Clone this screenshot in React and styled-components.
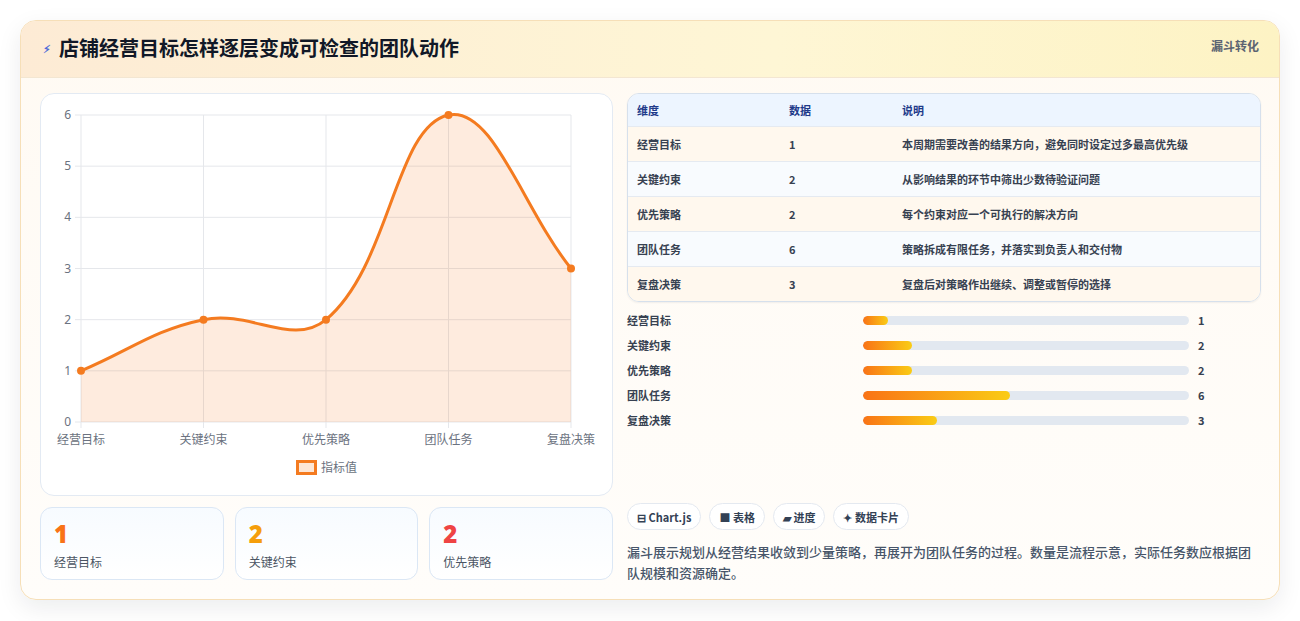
import React from 'react';
import styled, { createGlobalStyle } from 'styled-components';

const Global = createGlobalStyle`
  body { margin: 0; background: #ffffff; font-family: "Noto Sans CJK SC", "Noto Sans", sans-serif; }
`;

const Page = styled.div`
  padding: 20px 20px 21px 20px;
  height: 621px;
  box-sizing: border-box;
`;

const Card = styled.div`
  height: 580px;
  box-sizing: border-box;
  border: 1px solid #f6dfb8;
  border-radius: 16px;
  background: linear-gradient(180deg, #fffaf3 0%, #fffdfa 100%);
  box-shadow: 0 8px 24px rgba(15, 23, 42, 0.08);
  overflow: hidden;
`;

const Header = styled.div`
  height: 56px;
  display: flex;
  align-items: flex-start;
  justify-content: space-between;
  padding: 0 20px 0 22px;
  background: linear-gradient(90deg, #fdebd5 0%, #fef6d5 60%, #fdf3c4 100%);
  border-bottom: 1px solid #f3e6d2;
`;

const Title = styled.h1`
  margin: 12px 0 0;
  display: flex;
  align-items: center;
  gap: 8px;
  font-size: 20px;
  font-weight: 700;
  color: #111827;
`;

const Bolt = styled.span`
  font-size: 11px;
  color: #4f6bd8;
`;

const Tag = styled.span`
  margin-top: 16px;
  font-size: 12px;
  font-weight: 700;
  color: #5b6472;
`;

const Body = styled.div`
  display: grid;
  grid-template-columns: 573px 634px;
  gap: 14px;
  padding: 15px 19px 0 19px;
`;

const Left = styled.div`
  display: flex;
  flex-direction: column;
  gap: 11px;
`;

const ChartBox = styled.div`
  height: 403px;
  box-sizing: border-box;
  border: 1px solid #e3eaf3;
  border-radius: 14px;
  background: #ffffff;
`;

const Stats = styled.div`
  display: grid;
  grid-template-columns: repeat(3, 1fr);
  gap: 11px;
`;

const Stat = styled.div`
  height: 73px;
  box-sizing: border-box;
  border: 1px solid #dbe7f5;
  border-radius: 12px;
  background: linear-gradient(180deg, #f7fbff, #ffffff);
  padding: 12px 13px;
`;

const StatNum = styled.div`
  font-family: "Open Sans", sans-serif;
  font-size: 24px;
  font-weight: 800;
  line-height: 28px;
  color: ${p => p.$c};
`;

const StatLabel = styled.div`
  margin-top: 5px;
  font-size: 12px;
  color: #4b5563;
`;

const Right = styled.div`
  display: flex;
  flex-direction: column;
`;

const Table = styled.div`
  border: 1px solid #d6e0ec;
  border-radius: 12px;
  overflow: hidden;
  box-shadow: 0 1px 2px rgba(15, 23, 42, 0.06);
`;

const Row = styled.div`
  display: grid;
  grid-template-columns: 152px 113px 1fr;
  height: ${p => (p.$head ? 32 : 34)}px;
  align-items: center;
  padding-left: 9px;
  font-size: 11px;
  font-weight: 700;
  color: ${p => (p.$head ? '#1e3a8a' : '#374151')};
  background: ${p => (p.$head ? '#edf5ff' : p.$odd ? '#f8fbfe' : '#fff8ee')};
  border-top: ${p => (p.$head ? 'none' : '1px solid #e5eaf1')};
`;

const Bars = styled.div`
  display: flex;
  flex-direction: column;
  gap: 7px;
  margin-top: 9px;
`;

const BarRow = styled.div`
  display: grid;
  grid-template-columns: 236px 326px 1fr;
  align-items: center;
  height: 18px;
  font-size: 11px;
  font-weight: 700;
  color: #374151;
`;

const Track = styled.div`
  height: 9px;
  border-radius: 5px;
  background: #e2e8f0;
  overflow: hidden;
`;

const Fill = styled.div`
  height: 100%;
  border-radius: 5px;
  background: linear-gradient(90deg, #f97316, #facc15);
`;

const BarVal = styled.span`
  padding-left: 9px;
`;

const Chips = styled.div`
  display: flex;
  gap: 8px;
  margin-top: 74px;
`;

const Chip = styled.span`
  height: 27px;
  box-sizing: border-box;
  padding: 0 9px;
  display: inline-flex;
  align-items: center;
  gap: 3px;
  border: 1px solid #e4e9f0;
  border-radius: 14px;
  background: #ffffff;
  font-size: 11px;
  font-weight: 700;
  color: #334155;
`;

const Desc = styled.p`
  margin: 11px 0 0;
  font-size: 13px;
  line-height: 21px;
  color: #475569;
  font-weight: 500;
`;

const labels = ['经营目标', '关键约束', '优先策略', '团队任务', '复盘决策'];
const values = [1, 2, 2, 6, 3];
const notes = [
  '本周期需要改善的结果方向，避免同时设定过多最高优先级',
  '从影响结果的环节中筛出少数待验证问题',
  '每个约束对应一个可执行的解决方向',
  '策略拆成有限任务，并落实到负责人和交付物',
  '复盘后对策略作出继续、调整或暂停的选择',
];

const X0 = 40, X1 = 530, YT = 21, YB = 328;
const px = i => X0 + ((X1 - X0) / 4) * i;
const py = v => YB - ((YB - YT) / 6) * v;

function curvePath(pts) {
  const t = 0.4;
  const cps = pts.map((p, i) => {
    const p0 = pts[i - 1] || p, p2 = pts[i + 1] || p;
    const d01 = Math.hypot(p[0] - p0[0], p[1] - p0[1]);
    const d12 = Math.hypot(p2[0] - p[0], p2[1] - p[1]);
    const s = d01 + d12 || 1;
    const fa = (t * d01) / s, fb = (t * d12) / s;
    return {
      prev: [p[0] - fa * (p2[0] - p0[0]), p[1] - fa * (p2[1] - p0[1])],
      next: [p[0] + fb * (p2[0] - p0[0]), p[1] + fb * (p2[1] - p0[1])],
    };
  });
  let d = `M${pts[0][0]},${pts[0][1]}`;
  for (let i = 1; i < pts.length; i++) {
    const a = cps[i - 1].next, b = cps[i].prev;
    d += ` C${a[0]},${a[1]} ${b[0]},${b[1]} ${pts[i][0]},${pts[i][1]}`;
  }
  return d;
}

function Chart() {
  const pts = values.map((v, i) => [px(i), py(v)]);
  const line = curvePath(pts);
  return (
    <svg width="571" height="401" style={{ display: 'block' }}>
      {[0, 1, 2, 3, 4, 5, 6].map(v => (
        <g key={v}>
          <line x1={X0 - 6} x2={X1} y1={py(v)} y2={py(v)} stroke="#e5e7eb" />
          <text x={X0 - 10} y={py(v) + 4} textAnchor="end" fontSize="12" fill="#6b7280" fontFamily="Noto Sans, sans-serif">{v}</text>
        </g>
      ))}
      {labels.map((l, i) => (
        <g key={l}>
          <line x1={px(i)} x2={px(i)} y1={YT} y2={YB + 6} stroke="#e5e7eb" />
          <text x={px(i)} y={YB + 22} textAnchor="middle" fontSize="12" fill="#6b7280" fontFamily="Noto Sans CJK SC, sans-serif">{l}</text>
        </g>
      ))}
      <path d={`${line} L${X1},${YB} L${X0},${YB} Z`} fill="rgba(249,115,22,0.14)" />
      <path d={line} fill="none" stroke="#f47b20" strokeWidth="3" />
      {pts.map((p, i) => <circle key={i} cx={p[0]} cy={p[1]} r="4" fill="#f47b20" />)}
      <rect x="256.5" y="367.5" width="18" height="12" fill="#fde6d5" stroke="#f47b20" strokeWidth="3" />
      <text x="280" y="378" fontSize="12" fill="#6b7280" fontFamily="Noto Sans CJK SC, sans-serif">指标值</text>
    </svg>
  );
}

export default function App() {
  return (
    <Page>
      <Global />
      <Card>
        <Header>
          <Title><Bolt>⚡︎</Bolt>店铺经营目标怎样逐层变成可检查的团队动作</Title>
          <Tag>漏斗转化</Tag>
        </Header>
        <Body>
          <Left>
            <ChartBox><Chart /></ChartBox>
            <Stats>
              <Stat><StatNum $c="#f97316">1</StatNum><StatLabel>经营目标</StatLabel></Stat>
              <Stat><StatNum $c="#f59e0b">2</StatNum><StatLabel>关键约束</StatLabel></Stat>
              <Stat><StatNum $c="#ef4444">2</StatNum><StatLabel>优先策略</StatLabel></Stat>
            </Stats>
          </Left>
          <Right>
            <Table>
              <Row $head><span>维度</span><span>数据</span><span>说明</span></Row>
              {labels.map((l, i) => (
                <Row key={l} $odd={i % 2 === 1}><span>{l}</span><span>{values[i]}</span><span>{notes[i]}</span></Row>
              ))}
            </Table>
            <Bars>
              {labels.map((l, i) => (
                <BarRow key={l}>
                  <span>{l}</span>
                  <Track><Fill style={{ width: `${(values[i] / 13.3) * 100}%` }} /></Track>
                  <BarVal>{values[i]}</BarVal>
                </BarRow>
              ))}
            </Bars>
            <Chips>
              <Chip>⊟ Chart.js</Chip>
              <Chip>■ 表格</Chip>
              <Chip>▰ 进度</Chip>
              <Chip>✦ 数据卡片</Chip>
            </Chips>
            <Desc>漏斗展示规划从经营结果收敛到少量策略，再展开为团队任务的过程。数量是流程示意，实际任务数应根据团队规模和资源确定。</Desc>
          </Right>
        </Body>
      </Card>
    </Page>
  );
}
